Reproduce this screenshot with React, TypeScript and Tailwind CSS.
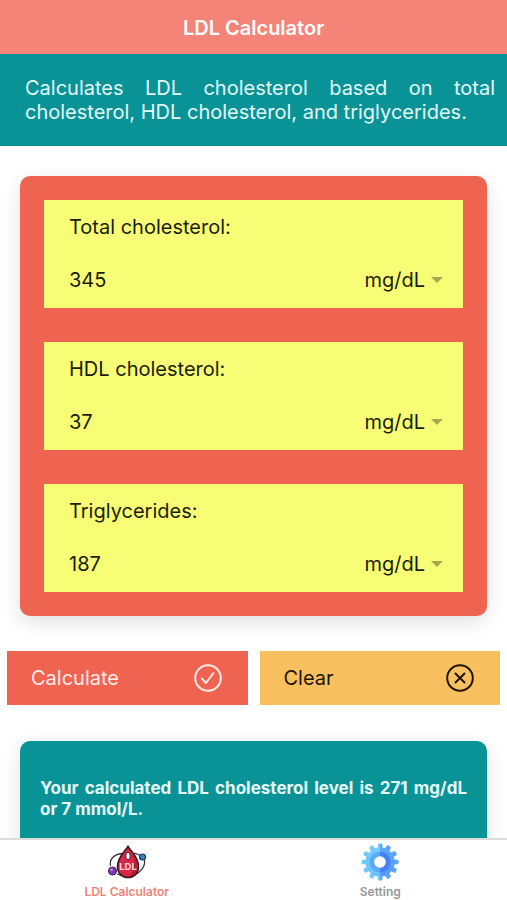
import { useState } from "react";

type Unit = "mg/dL" | "mmol/L";

type FieldProps = {
  id: string;
  label: string;
  value: string;
  unit: Unit;
  onValue: (value: string) => void;
  onUnit: (unit: Unit) => void;
};

function Field({ id, label, value, unit, onValue, onUnit }: FieldProps) {
  return (
    <div className="bg-[#f7fd75] pr-5 pb-0.5 pl-[25px] text-xl text-[#1c1c08]">
      <label htmlFor={id} className="flex h-[53px] items-center">
        {label}
      </label>
      <div className="flex h-[53px] items-center">
        <input
          id={id}
          inputMode="decimal"
          value={value}
          onChange={(e) => onValue(e.target.value)}
          className="h-full min-w-0 flex-1 bg-transparent outline-none"
        />
        <select
          aria-label={`${label} unit`}
          value={unit}
          onChange={(e) => onUnit(e.target.value as Unit)}
          className="field-sizing-content appearance-none bg-transparent outline-none"
        >
          <option>mg/dL</option>
          <option>mmol/L</option>
        </select>
        <svg viewBox="0 0 12 6" className="ml-1.5 h-1.5 w-3 fill-[#a5a94e]" aria-hidden="true">
          <path d="M0 0h12L6 6z" />
        </svg>
      </div>
    </div>
  );
}

function DropIcon() {
  return (
    <svg viewBox="0 0 42 36" className="h-9 w-[42px]" aria-hidden="true">
      <g fill="none" stroke="#3a3236" strokeWidth="1.3">
        <path d="M16 9.500C8 10.500 3 15 4.500 22M11 30c6 3 16 3 21.500-1.500C37 25 39.500 21 38.500 16M28 9l7 2.500" />
      </g>
      <path
        d="M22 2.500c3 5 10.500 10.500 10.500 20 0 7-4.500 11-10.500 11s-10.500-4-10.500-11C11.500 13 19 7.500 22 2.500z"
        fill="#dc2747"
        stroke="#35151d"
        strokeWidth="1.500"
      />
      <path d="M26 9c3 4 5.700 8 5.700 13.500 0 6-4 9.500-9.200 10.200C29 28 30 18 26 9z" fill="#b51c38" />
      <ellipse cx="22" cy="12" rx="2.200" ry="3.800" fill="#fff" stroke="#35151d" strokeWidth="0.900" />
      <text
        x="22"
        y="26"
        textAnchor="middle"
        fontSize="9.500"
        fontWeight="700"
        fill="#ffd9de"
        fontFamily="Inter, sans-serif"
      >
        LDL
      </text>
      <circle cx="6.500" cy="27" r="4" fill="#8338b4" stroke="#35204a" strokeWidth="1" />
      <circle cx="5.500" cy="25.700" r="1.300" fill="#c795e6" />
      <circle cx="36.500" cy="13" r="3" fill="#2f86cf" stroke="#1b3a5c" strokeWidth="1.200" />
    </svg>
  );
}

const TEETH = [0, 30, 60, 90, 120, 150, 180, 210, 240, 270, 300, 330];

function GearShape() {
  return (
    <>
      {TEETH.map((angle) => (
        <rect key={angle} x="16.700" y="0.500" width="4.600" height="8" rx="1.500" transform={`rotate(${angle} 19 19)`} />
      ))}
      <circle cx="19" cy="19" r="14.500" />
    </>
  );
}

function GearIcon() {
  return (
    <svg viewBox="0 0 38 38" className="h-[38px] w-[38px]" aria-hidden="true">
      <defs>
        <linearGradient id="gearLeft" x1="0" y1="0" x2="0" y2="1">
          <stop offset="0" stopColor="#74d0f8" />
          <stop offset="1" stopColor="#6cc0fb" />
        </linearGradient>
        <linearGradient id="gearRight" x1="0" y1="0" x2="0" y2="1">
          <stop offset="0" stopColor="#62a8fb" />
          <stop offset="1" stopColor="#5599fb" />
        </linearGradient>
        <clipPath id="rightHalf">
          <rect x="19" y="0" width="19" height="38" />
        </clipPath>
      </defs>
      <g fill="url(#gearLeft)">
        <GearShape />
      </g>
      <g fill="url(#gearRight)" clipPath="url(#rightHalf)">
        <GearShape />
      </g>
      <circle cx="19" cy="19" r="10.500" fill="#5aaafa" />
      <path d="M19 8.500a10.500 10.500 0 0 1 0 21z" fill="#4480fa" />
      <circle cx="19" cy="19" r="5.800" fill="#fff" />
    </svg>
  );
}

const FIELDS = [
  { id: "total", label: "Total cholesterol:", initial: "345" },
  { id: "hdl", label: "HDL cholesterol:", initial: "37" },
  { id: "triglycerides", label: "Triglycerides:", initial: "187" },
];

const FACTORS = [38.67, 38.67, 88.57];

function ldlText(values: string[], units: Unit[]) {
  const [total, hdl, tri] = values.map((v, i) => Number(v) * (units[i] === "mg/dL" ? 1 : FACTORS[i]));
  const ldl = total - hdl - tri / 5;
  return `Your calculated LDL cholesterol level is ${Math.round(ldl)} mg/dL or ${Math.round(ldl / 38.67)} mmol/L.`;
}

export default function App() {
  const [values, setValues] = useState(FIELDS.map((f) => f.initial));
  const [units, setUnits] = useState<Unit[]>(["mg/dL", "mg/dL", "mg/dL"]);
  const [result, setResult] = useState(ldlText(values, units));

  const clear = () => {
    setValues(["", "", ""]);
    setResult("");
  };

  return (
    <div className="flex h-screen flex-col bg-white font-[Inter,sans-serif]">
      <header className="flex h-[54px] shrink-0 items-center justify-center bg-[#f48478] pt-0.5 text-white">
        <h1 className="text-xl font-semibold">LDL Calculator</h1>
      </header>

      <main className="min-h-0 flex-1 overflow-y-auto [scrollbar-width:none]">
        <p className="bg-[#0a9396] py-[22px] pr-3 pl-[25px] text-justify text-xl leading-6 text-[#e2fafa]">
          Calculates LDL cholesterol based on total cholesterol, HDL cholesterol, and triglycerides.
        </p>

        <section className="mx-5 mt-[30px] flex flex-col gap-[34px] rounded-[10px] bg-[#ef6351] p-6 shadow-[0_6px_20px_rgba(0,0,0,0.12)]">
          {FIELDS.map((field, i) => (
            <Field
              key={field.id}
              id={field.id}
              label={field.label}
              value={values[i]}
              unit={units[i]}
              onValue={(v) => setValues(values.map((old, n) => (n === i ? v : old)))}
              onUnit={(u) => setUnits(units.map((old, n) => (n === i ? u : old)))}
            />
          ))}
        </section>

        <div className="mt-[35px] grid grid-cols-2 gap-3 px-[7px] text-xl">
          <button
            type="button"
            onClick={() => setResult(ldlText(values, units))}
            className="flex h-[54px] items-center justify-between bg-[#ef6351] px-6 text-[#ffece8]"
          >
            Calculate
            <svg viewBox="0 0 32 32" className="h-8 w-8 fill-none stroke-current stroke-2" aria-hidden="true">
              <circle cx="16" cy="16" r="12.800" />
              <path d="M9.800 16.500l4.200 4.500 7.500-10" strokeLinecap="round" strokeLinejoin="round" />
            </svg>
          </button>
          <button
            type="button"
            onClick={clear}
            className="flex h-[54px] items-center justify-between bg-[#f9c05f] px-6 text-[#1f1505]"
          >
            Clear
            <svg viewBox="0 0 32 32" className="h-8 w-8 fill-none stroke-current stroke-2" aria-hidden="true">
              <circle cx="16" cy="16" r="12.800" />
              <path d="M11.500 11.500l9 9M20.500 11.500l-9 9" strokeLinecap="round" />
            </svg>
          </button>
        </div>

        <section className="mx-5 my-9 rounded-[10px] bg-[#0a9396] px-5 py-[37px] shadow-[0_6px_20px_rgba(0,0,0,0.12)]">
          <p className="text-justify text-[17px] leading-[21px] font-bold text-[#e6fbfb]">{result}</p>
        </section>
      </main>

      <nav className="grid h-[62px] shrink-0 grid-cols-2 border-t-2 border-[#dcdcdc] bg-white text-xs font-semibold">
        <a href="#calculator" className="flex flex-col items-center text-[#f08376]">
          <span className="flex h-11 items-center">
            <DropIcon />
          </span>
          LDL Calculator
        </a>
        <a href="#setting" className="flex flex-col items-center text-[#999999]">
          <span className="flex h-11 items-center">
            <GearIcon />
          </span>
          Setting
        </a>
      </nav>
    </div>
  );
}
